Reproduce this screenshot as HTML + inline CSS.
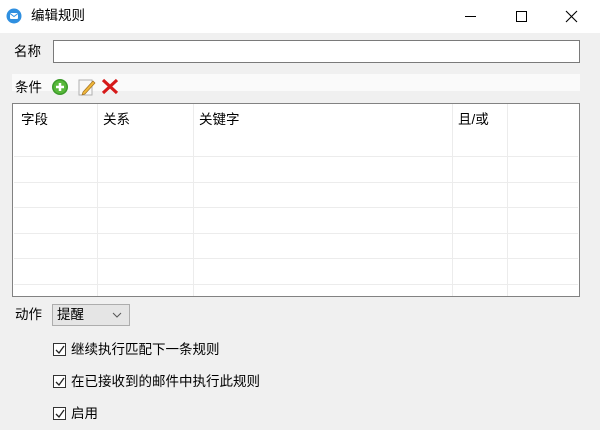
<!DOCTYPE html>
<html><head><meta charset="utf-8"><style>
*{margin:0;padding:0;box-sizing:border-box}
body{width:600px;height:430px;background:#f0f0f0;font-family:"Liberation Sans","Noto Sans CJK SC",sans-serif;font-size:13.5px;color:#000;position:relative;overflow:hidden}
.abs{position:absolute}
.title{left:0;top:0;width:600px;height:33px;background:#fff}
.t{position:absolute;white-space:nowrap;line-height:16px}
.vl{position:absolute;width:1px;background:#ececec}
.hl{position:absolute;height:1px;background:#ececec;left:1px;right:1px}
.cb{position:absolute;width:13px;height:13px;border:1px solid #333;background:#fff}
</style></head><body>
<div class="abs title"></div>
<svg class="abs" style="left:6px;top:8px" width="16" height="16"><circle cx="8" cy="8" r="7.5" fill="#2f8fe0"/><rect x="4" y="5" width="8" height="6" fill="#fff" rx="1"/><path d="M4 5.5 L8 8.5 L12 5.5" stroke="#2f8fe0" fill="none" stroke-width="1"/></svg>
<div class="t" style="left:31px;top:8px">编辑规则</div>
<div class="abs" style="left:465px;top:16px;width:11px;height:1px;background:#000"></div>
<div class="abs" style="left:516px;top:11px;width:11px;height:11px;border:1px solid #000"></div>
<svg class="abs" style="left:565px;top:10px" width="13" height="13"><path d="M1 1L12 12M12 1L1 12" stroke="#000" stroke-width="1.1"/></svg>

<div class="t" style="left:14px;top:44px">名称</div>
<div class="abs" style="left:53px;top:40px;width:527px;height:23px;border:1px solid #7a7a7a;background:#fff"></div>

<div class="abs" style="left:12px;top:74px;width:568px;height:17px;background:#fafafa"></div>
<div class="t" style="left:15px;top:80px">条件</div>
<svg class="abs" style="left:51px;top:78px" width="18" height="18"><circle cx="9" cy="9" r="8" fill="#3c9a2a"/><circle cx="9" cy="9" r="6.5" fill="#58b83a"/><path d="M9 5v8M5 9h8" stroke="#fff" stroke-width="2.5"/></svg>
<svg class="abs" style="left:78px;top:77px" width="18" height="19"><rect x="1" y="3" width="13" height="15" fill="#f8f8f8" stroke="#b0b0b0"/><path d="M5 15 L15 4 L17 6 L7 17 L4 18Z" fill="#f0b73a" stroke="#a07020" stroke-width=".7"/></svg>
<svg class="abs" style="left:101px;top:78px" width="18" height="17"><path d="M2 2 L16 15M16 2 L2 15" stroke="#d61a1a" stroke-width="3.2"/></svg>

<div class="abs" style="left:12px;top:103px;width:568px;height:194px;border:1px solid #828282;background:#fff">
<div class="vl" style="left:84px;top:0;height:192px"></div>
<div class="vl" style="left:180px;top:0;height:192px"></div>
<div class="vl" style="left:439px;top:0;height:192px"></div>
<div class="vl" style="left:494px;top:0;height:192px"></div>
<div class="hl" style="top:52px"></div>
<div class="hl" style="top:78px"></div>
<div class="hl" style="top:103px"></div>
<div class="hl" style="top:129px"></div>
<div class="hl" style="top:154px"></div>
<div class="hl" style="top:180px"></div>
<div class="t" style="left:8px;top:8px">字段</div>
<div class="t" style="left:90px;top:8px">关系</div>
<div class="t" style="left:186px;top:8px">关键字</div>
<div class="t" style="left:445px;top:8px">且/或</div>
</div>

<div class="t" style="left:15px;top:307px">动作</div>
<div class="abs" style="left:52px;top:304px;width:78px;height:22px;border:1px solid #adadad;background:#e5e5e5"></div>
<div class="t" style="left:57px;top:307px">提醒</div>
<svg class="abs" style="left:112px;top:312px" width="10" height="6"><path d="M1 1L5 5L9 1" stroke="#555" fill="none"/></svg>

<div class="cb" style="left:53px;top:343px"></div><svg class="abs" style="left:54px;top:344px" width="12" height="12"><path d="M2 6L5 9L10 2" stroke="#222" fill="none" stroke-width="1.3"/></svg>
<div class="t" style="left:71px;top:342px">继续执行匹配下一条规则</div>
<div class="cb" style="left:53px;top:375px"></div><svg class="abs" style="left:54px;top:376px" width="12" height="12"><path d="M2 6L5 9L10 2" stroke="#222" fill="none" stroke-width="1.3"/></svg>
<div class="t" style="left:71px;top:374px">在已接收到的邮件中执行此规则</div>
<div class="cb" style="left:53px;top:407px"></div><svg class="abs" style="left:54px;top:408px" width="12" height="12"><path d="M2 6L5 9L10 2" stroke="#222" fill="none" stroke-width="1.3"/></svg>
<div class="t" style="left:71px;top:406px">启用</div>
</body></html>
